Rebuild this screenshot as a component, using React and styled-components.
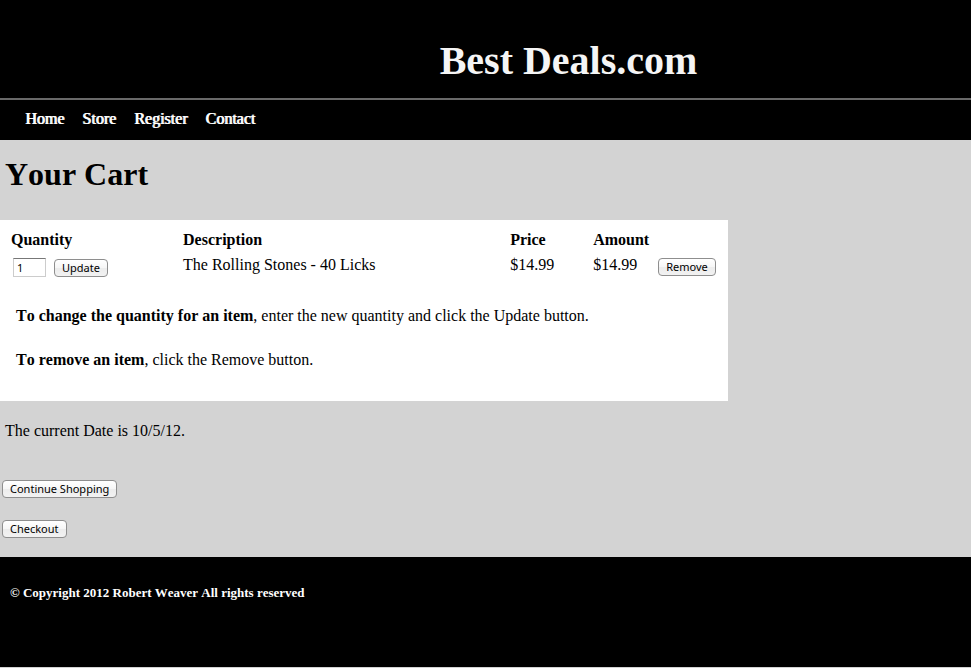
import React from 'react';
import styled, { createGlobalStyle } from 'styled-components';

const GlobalStyle = createGlobalStyle`
  *, *::before, *::after { box-sizing: border-box; }
  body {
    margin: 0;
    background: #d3d3d3;
    color: #000;
    font-family: "Liberation Serif", "Times New Roman", Times, serif;
    font-size: 16px;
    line-height: 18px;
    font-kerning: none;
  }
`;

const Header = styled.header`
  padding: 38px 0 14px 166px;
  background: #000;
  color: #f5f5f5;
  text-align: center;
`;

const SiteTitle = styled.h1`
  margin: 0;
  font-size: 40px;
  line-height: 46px;
`;

const Nav = styled.nav`
  display: flex;
  gap: 18px;
  padding: 10px 25px 12px;
  border-top: 2px solid #696969;
  background: #000;
`;

const NavLink = styled.a`
  color: #fff;
  text-decoration: none;
  text-shadow: 1px 0 0 #fff;
`;

const PageTitle = styled.h2`
  margin: 0;
  padding: 16px 5px 28px;
  font-size: 32px;
  line-height: 36px;
`;

const CartPanel = styled.section`
  width: 75%;
  padding: 8px 0 32px;
  background: #fff;
`;

const CartTable = styled.table`
  width: 100%;
  border-collapse: collapse;
  table-layout: fixed;
`;

const Column = styled.col`
  width: ${(p) => p.$width}px;
`;

const HeadCell = styled.th`
  padding: 3px 0 4px 11px;
  text-align: left;
`;

const Cell = styled.td`
  padding: 3px 0 0 11px;
  vertical-align: top;
`;

const Controls = styled.form`
  display: flex;
  align-items: flex-end;
  gap: 8px;
  padding: 2px 0 4px ${(p) => p.$inset || 0}px;
`;

const QuantityInput = styled.input`
  width: 33px;
  height: 19px;
  padding: 0 3px;
  border: 1px solid #ccc;
  border-top-color: #777;
  border-radius: 0;
  background: #fff;
  font: 11px "Noto Sans", sans-serif;
`;

const Button = styled.button`
  height: 18px;
  padding: 0 7px;
  border: 1px solid #8e8e8e;
  border-radius: 4px;
  background: linear-gradient(#fff 0%, #f6f6f6 50%, #ececec 51%, #f2f2f2 100%);
  color: #000;
  font: 11px/16px "Noto Sans", sans-serif;
  white-space: nowrap;
`;

const Help = styled.p`
  margin: 26px 16px 0;
`;

const DateLine = styled.p`
  margin: 0;
  padding: 21px 5px 40px;
`;

const Actions = styled.div`
  display: flex;
  flex-direction: column;
  align-items: flex-start;
  gap: 22px;
  padding: 0 2px 19px;
`;

const Footer = styled.footer`
  min-height: 110px;
  padding: 27px 10px;
  background: #000;
  color: #fff;
  font-size: 13px;
  font-weight: bold;
`;

const FooterText = styled.p`
  margin: 0;
`;

const links = ['Home', 'Store', 'Register', 'Contact'];
const columnWidths = [172, 327, 83, 65, 81];
const keepPage = (e) => e.preventDefault();

export default function App() {
  return (
    <>
      <GlobalStyle />
      <Header>
        <SiteTitle>Best Deals.com</SiteTitle>
      </Header>
      <Nav>
        {links.map((name) => (
          <NavLink key={name} href={`#${name.toLowerCase()}`}>{name}</NavLink>
        ))}
      </Nav>
      <main>
        <PageTitle>Your Cart</PageTitle>
        <CartPanel>
          <CartTable>
            <colgroup>
              {columnWidths.map((width, i) => <Column key={i} $width={width} />)}
            </colgroup>
            <thead>
              <tr>
                <HeadCell scope="col">Quantity</HeadCell>
                <HeadCell scope="col">Description</HeadCell>
                <HeadCell scope="col">Price</HeadCell>
                <HeadCell scope="col">Amount</HeadCell>
                <Cell />
              </tr>
            </thead>
            <tbody>
              <tr>
                <Cell>
                  <Controls $inset={2} onSubmit={keepPage}>
                    <QuantityInput aria-label="Quantity" type="text" defaultValue="1" />
                    <Button type="submit">Update</Button>
                  </Controls>
                </Cell>
                <Cell>The Rolling Stones - 40 Licks</Cell>
                <Cell>$14.99</Cell>
                <Cell>$14.99</Cell>
                <Cell>
                  <Controls onSubmit={keepPage}>
                    <Button type="submit">Remove</Button>
                  </Controls>
                </Cell>
              </tr>
            </tbody>
          </CartTable>
          <Help><b>To change the quantity for an item</b>, enter the new quantity and click the Update button.</Help>
          <Help><b>To remove an item</b>, click the Remove button.</Help>
        </CartPanel>
        <DateLine>The current Date is 10/5/12.</DateLine>
        <Actions>
          <Button type="button">Continue Shopping</Button>
          <Button type="button">Checkout</Button>
        </Actions>
      </main>
      <Footer>
        <FooterText>© Copyright 2012 Robert Weaver All rights reserved</FooterText>
      </Footer>
    </>
  );
}
